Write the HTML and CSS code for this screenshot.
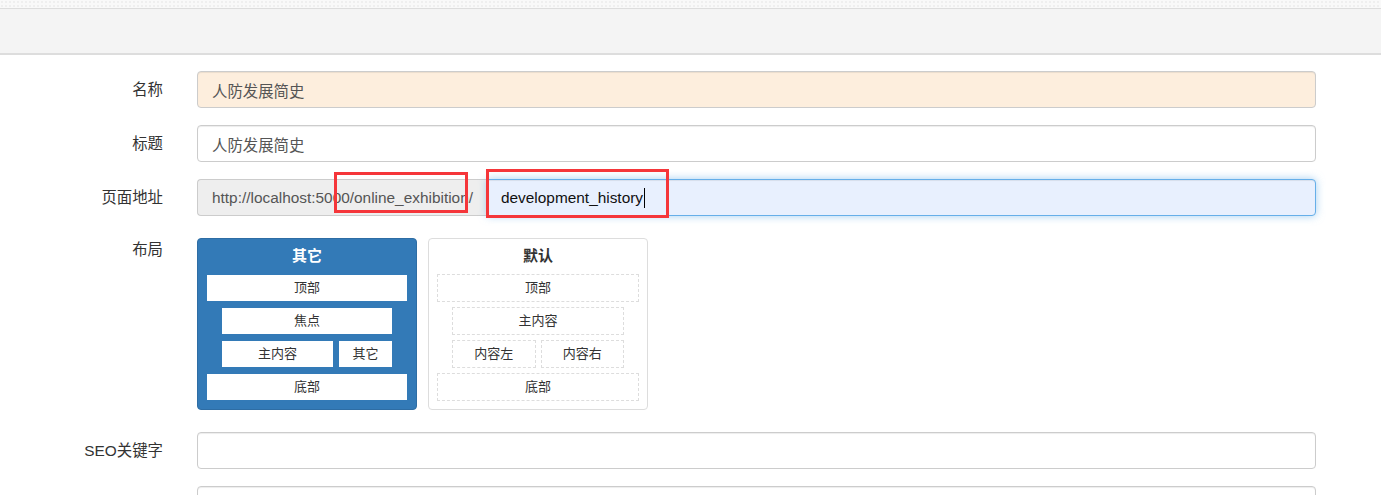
FILE: index.html
```html
<!DOCTYPE html>
<html lang="zh-CN">
<head>
    <meta charset="UTF-8">
    <title>页面设置</title>
    <link rel="stylesheet" href="styles.css">
</head>
<body>
    <div class="top-strip"></div>
    <div class="toolbar"></div>

    <form class="page-form">
        <div class="form-row">
            <label class="row-label">名称</label>
            <div class="row-control">
                <input type="text" class="field field-warn" value="人防发展简史">
            </div>
        </div>

        <div class="form-row">
            <label class="row-label">标题</label>
            <div class="row-control">
                <input type="text" class="field" value="人防发展简史">
            </div>
        </div>

        <div class="form-row">
            <label class="row-label">页面地址</label>
            <div class="row-control url-control">
                <div class="url-group">
                    <span class="url-prefix">http://localhost:5000/online_exhibition/</span>
                    <div class="field field-focus url-input">development_history<span class="caret"></span></div>
                </div>
                <span class="mark mark-prefix"></span>
                <span class="mark mark-slug"></span>
            </div>
        </div>

        <div class="form-row layout-row">
            <label class="row-label label-top">布局</label>
            <div class="row-control">
                <div class="layout-options">
                    <div class="layout-card active">
                        <div class="layout-title">其它</div>
                        <div class="layout-block">顶部</div>
                        <div class="layout-block inset">焦点</div>
                        <div class="layout-split inset">
                            <div class="layout-block grow">主内容</div>
                            <div class="layout-block side">其它</div>
                        </div>
                        <div class="layout-block">底部</div>
                    </div>
                    <div class="layout-card">
                        <div class="layout-title">默认</div>
                        <div class="layout-block">顶部</div>
                        <div class="layout-block inset">主内容</div>
                        <div class="layout-split inset">
                            <div class="layout-block grow">内容左</div>
                            <div class="layout-block grow">内容右</div>
                        </div>
                        <div class="layout-block">底部</div>
                    </div>
                </div>
            </div>
        </div>

        <div class="form-row">
            <label class="row-label">SEO关键字</label>
            <div class="row-control">
                <input type="text" class="field" value="">
            </div>
        </div>

        <div class="form-row">
            <label class="row-label"></label>
            <div class="row-control">
                <input type="text" class="field" value="">
            </div>
        </div>
    </form>
</body>
</html>
```

FILE: styles.css
```css
:root {
    --text-color: #333333;
    --input-text: #555555;
    --input-border: #cccccc;
    --primary: #337ab7;
    --primary-border: #2e6da4;
    --focus-border: #66afe9;
    --mark-red: #f5363a;
}

* {
    box-sizing: border-box;
}

body {
    margin: 0;
    background: #ffffff;
    color: var(--text-color);
    font-family: "Liberation Sans", "Noto Sans CJK SC", sans-serif;
    font-size: 15.4px;
    overflow: hidden;
}

.top-strip {
    height: 9px;
    background-color: #f9f9f9;
    background-image: radial-gradient(#efefef 0.8px, transparent 1px);
    background-size: 4px 4px;
    border-bottom: 1px solid #dddddd;
}

.toolbar {
    height: 46px;
    background: #f4f4f4;
    border-bottom: 2px solid #dddddd;
}

.page-form {
    padding: 16px 65px 0 0;
}

.form-row {
    display: flex;
    gap: 34px;
    margin-bottom: 17px;
}

.layout-row {
    margin-top: 22px;
    margin-bottom: 22px;
}

.row-label {
    width: 163px;
    flex-shrink: 0;
    text-align: right;
    line-height: 37px;
    height: 37px;
}

.label-top {
    line-height: 24px;
}

.row-control {
    flex-grow: 1;
    min-width: 0;
}

.field {
    display: block;
    width: 100%;
    height: 37px;
    padding: 0 14px;
    font: inherit;
    color: var(--input-text);
    background: #ffffff;
    border: 1px solid var(--input-border);
    border-radius: 4px;
    box-shadow: inset 0 1px 1px rgba(0, 0, 0, 0.075);
    outline: none;
}

.field-warn {
    background: #fdeedd;
}

.url-control {
    position: relative;
}

.url-group {
    display: flex;
}

.url-prefix {
    flex-shrink: 0;
    width: 290px;
    height: 37px;
    line-height: 35px;
    padding-left: 14px;
    color: var(--input-text);
    background: #eeeeee;
    border: 1px solid var(--input-border);
    border-right: 0;
    border-radius: 4px 0 0 4px;
    white-space: nowrap;
}

.url-input {
    flex-grow: 1;
    line-height: 35px;
    padding-left: 13px;
    color: #111111;
    background: #e8f0fe;
    border-color: var(--focus-border);
    border-radius: 0 4px 4px 0;
    box-shadow: inset 0 1px 1px rgba(0, 0, 0, 0.075), 0 0 8px rgba(102, 175, 233, 0.6);
}

.caret {
    display: inline-block;
    width: 1px;
    height: 20px;
    margin-left: 1px;
    background: #000000;
    vertical-align: -5px;
}

/* red annotation boxes drawn over the url field */
.mark {
    position: absolute;
    border: 3px solid var(--mark-red);
    pointer-events: none;
}

.mark-prefix {
    left: 137px;
    top: -7px;
    width: 134px;
    height: 41px;
}

.mark-slug {
    left: 289px;
    top: -10px;
    width: 183px;
    height: 49px;
}

.layout-options {
    display: flex;
    gap: 11px;
}

.layout-card {
    width: 220px;
    height: 172px;
    padding: 0 8px 8px;
    border: 1px solid #dddddd;
    border-radius: 4px;
    background: #ffffff;
    display: flex;
    flex-direction: column;
    gap: 5px;
}

.layout-title {
    height: 35px;
    line-height: 34px;
    margin-bottom: -5px;
    text-align: center;
    font-weight: bold;
    font-size: 15px;
}

.layout-block {
    height: 28px;
    line-height: 26px;
    text-align: center;
    font-size: 13px;
    border: 1px dashed #dddddd;
}

.layout-split {
    display: flex;
    gap: 5px;
}

.inset {
    margin: 0 15px;
}

.grow {
    flex: 1;
}

.layout-card.active {
    background: var(--primary);
    border-color: var(--primary-border);
    padding: 0 9px 8px;
    gap: 7px;
}

.layout-card.active .layout-title {
    height: 36px;
    line-height: 33px;
    margin-bottom: -7px;
    color: #ffffff;
}

.layout-card.active .layout-block {
    height: 26px;
    line-height: 26px;
    border: 0;
    background: #ffffff;
}

.layout-card.active .layout-split {
    gap: 6px;
}

.layout-card.active .side {
    width: 53px;
}
```
